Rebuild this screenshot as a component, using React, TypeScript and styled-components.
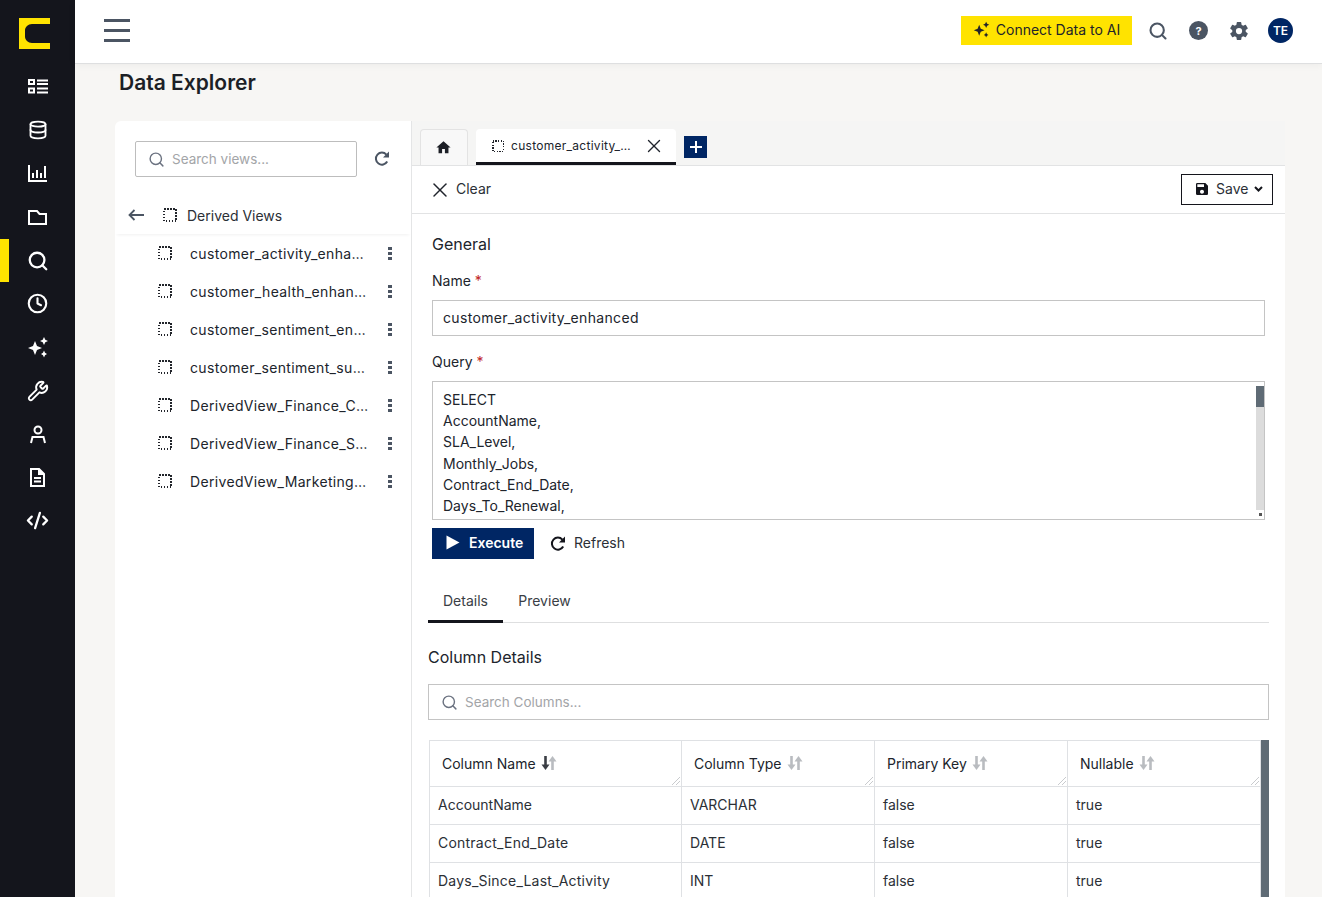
import React from 'react'
import styled, { createGlobalStyle } from 'styled-components'
import { Clock, CodeXml, Database, Search, Wrench, X } from 'lucide-react'
import { MdHome, MdSave } from 'react-icons/md'
import { IoSettingsSharp } from 'react-icons/io5'

const GlobalStyle = createGlobalStyle`
  html, body { margin: 0; padding: 0; height: 100%; overflow: hidden; }
  body {
    font-family: "Inter", "Liberation Sans", sans-serif;
    font-size: 14px;
    color: #20242c;
    background: #f7f6f4;
  }
  * { box-sizing: border-box; }
`

const Shell = styled.div`
  display: flex;
  width: 1322px;
  height: 897px;
  overflow: hidden;
`

const Sidebar = styled.nav`
  width: 75px;
  flex: none;
  background: #14151c;
  display: flex;
  flex-direction: column;
`

const Logo = styled.div`
  height: 65.3px;
  display: flex;
  align-items: center;
  justify-content: center;
  padding: 2px 6px 0 0;
`

const NavItem = styled.div<{ $active?: boolean }>`
  height: 43.4px;
  display: flex;
  align-items: center;
  justify-content: center;
  color: #fff;
  border-left: 9px solid ${(p) => (p.$active ? '#ffe300' : 'transparent')};
  padding-right: 9px;
`

const Main = styled.div`
  flex: 1;
  min-width: 0;
  display: flex;
  flex-direction: column;
`

const Header = styled.header`
  height: 64px;
  flex: none;
  background: #fff;
  border-bottom: 1px solid #dedfe0;
  box-shadow: 0 1px 8px rgba(0, 0, 0, 0.05);
  position: relative;
  display: flex;
  align-items: center;
  padding: 0 29px 2px 29px;
`

const Burger = styled.div`
  width: 26px;
  display: flex;
  flex-direction: column;
  gap: 7px;
  span {
    display: block;
    height: 3px;
    background: #4b5563;
  }
`

const HeaderRight = styled.div`
  margin-left: auto;
  display: flex;
  align-items: center;
`

const ConnectButton = styled.div`
  width: 171px;
  height: 29px;
  background: #ffe300;
  display: flex;
  align-items: center;
  justify-content: center;
  gap: 6px;
  padding-bottom: 2px;
  font-size: 14px;
  color: #22242a;
  margin-right: 16px;
`

const HeaderIcon = styled.div`
  width: 20px;
  height: 20px;
  margin-right: 20px;
  display: flex;
  align-items: center;
  justify-content: center;
  color: #4b5563;
`

const GearSlot = styled(HeaderIcon)`
  margin: 0 19px 0 1px;
`

const Avatar = styled.div`
  width: 25px;
  height: 25px;
  border-radius: 50%;
  background: #002664;
  color: #fff;
  font-size: 12px;
  font-weight: 600;
  display: flex;
  align-items: center;
  justify-content: center;
`

const Body = styled.div`
  flex: 1;
  min-height: 0;
  padding: 0 37px 0 40px;
  display: flex;
  flex-direction: column;
`

const PageTitle = styled.h1`
  margin: 0;
  height: 57px;
  padding: 6px 0 0 4px;
  font-size: 21px;
  line-height: 26px;
  font-weight: 600;
  color: #1c1f26;
`

const Panels = styled.div`
  flex: 1;
  min-height: 0;
  display: flex;
`

const LeftPanel = styled.aside`
  width: 297px;
  flex: none;
  background: #fff;
  border-right: 1px solid #e4e5e6;
  border-radius: 6px 0 0 0;
`

const SearchRow = styled.div`
  display: flex;
  align-items: center;
  padding: 20px 0 0 20px;
  gap: 17px;
`

const ViewSearch = styled.div`
  width: 222px;
  height: 36px;
  border: 1px solid #bdbdbd;
  border-radius: 2px;
  display: flex;
  align-items: center;
  gap: 7px;
  padding: 0 0 0 12px;
  color: #6b7280;
`

const Placeholder = styled.span`
  color: #a3a5a8;
  font-size: 13.5px;
`

const BackRow = styled.div`
  height: 38px;
  margin-top: 19px;
  display: flex;
  align-items: center;
  padding-left: 13px;
  box-shadow: 0 3px 3px -2px rgba(0, 0, 0, 0.06);
  color: #374151;
`

const BackSpacer = styled.span`
  width: 19px;
`

const BackLabel = styled.span`
  margin-left: 10px;
  font-size: 14px;
  color: #2b2f36;
`

const ViewRow = styled.div`
  height: 38px;
  display: flex;
  align-items: center;
  padding-left: 43px;
`

const ViewName = styled.span`
  width: 181px;
  margin-left: 18px;
  letter-spacing: 0.33px;
  white-space: nowrap;
  overflow: hidden;
  text-overflow: ellipsis;
  color: #20242c;
`

const Kebab = styled.div`
  margin-left: 17px;
  display: flex;
  flex-direction: column;
  gap: 2px;
  i {
    display: block;
    width: 4px;
    height: 3px;
    background: #4b5563;
  }
`

const RightPanel = styled.section`
  flex: 1;
  min-width: 0;
  background: #fff;
`

const TabBar = styled.div`
  height: 45px;
  background: #f5f5f4;
  border-bottom: 1px solid #e2e3e4;
  display: flex;
  align-items: flex-end;
  padding-left: 8px;
`

const HomeTab = styled.div`
  width: 48px;
  height: 36px;
  background: #f8f8f8;
  border: 1px solid #e3e3e3;
  border-bottom: none;
  border-radius: 4px 4px 0 0;
  display: flex;
  align-items: center;
  justify-content: center;
  padding-right: 1px;
  margin-right: 8px;
  color: #1c1f26;
`

const ActiveTab = styled.div`
  width: 200px;
  height: 36px;
  background: #fff;
  border-bottom: 3px solid #14151c;
  border-radius: 4px 4px 0 0;
  display: flex;
  align-items: center;
  padding-left: 16px;
  font-size: 12px;
  color: #20242c;
`

const TabName = styled.span`
  width: 121px;
  flex: none;
  margin: 0 11px 0 7px;
  letter-spacing: 0.28px;
  white-space: nowrap;
  overflow: hidden;
  text-overflow: ellipsis;
`

const AddTab = styled.div`
  width: 23px;
  height: 22px;
  margin: 0 0 7px 8px;
  background: #002664;
  color: #fff;
  display: flex;
  align-items: center;
  justify-content: center;
`

const Toolbar = styled.div`
  height: 48px;
  border-bottom: 1px solid #e2e3e4;
  display: flex;
  align-items: center;
  padding: 0 12px 0 16px;
`

const ClearLabel = styled.span`
  margin: 0 0 2px 4px;
  color: #2b2f36;
`

const SaveButton = styled.div`
  margin-left: auto;
  width: 92px;
  height: 31px;
  border: 1px solid #14151c;
  display: flex;
  align-items: center;
  gap: 6px;
  padding: 0 0 2px 12px;
  color: #2b2f36;
`

const Content = styled.div`
  padding: 0 16px;
`

const Form = styled.div`
  padding: 0 4px;
`

const SectionTitle = styled.h2`
  margin: 0;
  font-size: 16px;
  line-height: 20px;
  font-weight: 400;
  color: #20242c;
`

const GeneralTitle = styled(SectionTitle)`
  padding-top: 20px;
`

const Label = styled.div`
  margin-top: 18px;
  line-height: 18px;
  color: #20242c;
  b {
    color: #c02626;
    font-weight: 400;
  }
`

const TextInput = styled.div`
  margin-top: 10px;
  height: 36px;
  border: 1px solid #c4c4c4;
  padding: 0 0 2px 10px;
  letter-spacing: 0.33px;
  display: flex;
  align-items: center;
`

const QueryLabel = styled(Label)`
  margin-top: 17px;
`

const QueryBox = styled.div`
  margin-top: 10px;
  height: 139px;
  border: 1px solid #c4c4c4;
  position: relative;
  padding: 7px 10px;
  line-height: 21.2px;
  overflow: hidden;
`

const QueryScroll = styled.div`
  position: absolute;
  top: 4px;
  right: 0;
  bottom: 0;
  width: 8px;
  background: #dcdcdc;
  &::before {
    content: '';
    display: block;
    height: 21px;
    background: #5f6b75;
  }
  &::after {
    content: '';
    position: absolute;
    left: 0;
    right: 0;
    bottom: 0;
    height: 9px;
    background: linear-gradient(#555, #555) center / 3px 3px no-repeat #fff;
  }
`

const ActionRow = styled.div`
  display: flex;
  align-items: center;
  margin-top: 8px;
`

const ExecuteButton = styled.div`
  width: 102px;
  height: 31px;
  background: #002664;
  color: #fff;
  font-weight: 600;
  display: flex;
  align-items: center;
  gap: 9px;
  padding: 0 0 2px 14px;
`

const RefreshLabel = styled.span`
  margin: 0 0 2px 8px;
  color: #2b2f36;
`

const RefreshWrap = styled.div`
  margin-left: 16px;
  display: flex;
`

const SubTabs = styled.div`
  margin-top: 26px;
  height: 38px;
  border-bottom: 1px solid #dedfe0;
  display: flex;
`

const SubTab = styled.div<{ $active?: boolean }>`
  width: ${(p) => (p.$active ? '75px' : '83px')};
  height: 38px;
  display: flex;
  align-items: center;
  justify-content: center;
  padding-bottom: 4px;
  color: #3a3e45;
  border-bottom: 3px solid ${(p) => (p.$active ? '#14151c' : 'transparent')};
`

const ColumnTitle = styled(SectionTitle)`
  margin-top: 24px;
`

const ColumnSearch = styled.div`
  margin-top: 17px;
  height: 36px;
  border: 1px solid #c4c4c4;
  display: flex;
  align-items: center;
  gap: 7px;
  padding: 0 0 0 12px;
  color: #6b7280;
`

const TableWrap = styled.div`
  margin-top: 20px;
  padding-left: 1px;
  display: flex;
`

const Table = styled.div`
  width: 832px;
  flex: none;
  border-top: 1px solid #dfe1e4;
  border-left: 1px solid #dfe1e4;
`

const ScrollBar = styled.div`
  width: 8px;
  background: #5f6b75;
`

const Row = styled.div`
  display: grid;
  grid-template-columns: 252px 193px 193px 1fr;
`

const HeadCell = styled.div`
  height: 46px;
  border-right: 1px solid #dfe1e4;
  border-bottom: 1px solid #dfe1e4;
  padding: 0 0 1px 12px;
  display: flex;
  align-items: center;
  gap: 5px;
  position: relative;
  color: #20242c;
`

const ResizeMark = styled.svg`
  position: absolute;
  right: 1px;
  bottom: 1px;
`

const Cell = styled.div<{ $ident?: boolean }>`
  height: 38px;
  border-right: 1px solid #dfe1e4;
  border-bottom: 1px solid #dfe1e4;
  padding: 0 0 2px 8px;
  display: flex;
  align-items: center;
  letter-spacing: ${(p) => (p.$ident ? '0.22px' : '0')};
  color: #2b2f36;
`

const DottedSquare = ({ size = 14, color = '#22252b' }: { size?: number; color?: string }) => (
  <svg width={size} height={size} viewBox="0 0 14 14" fill="none" shapeRendering="crispEdges">
    <rect x="1" y="1" width="12" height="12" stroke={color} strokeWidth="1.5" strokeDasharray="1.5 1.5" />
  </svg>
)

const BrandLogo = () => (
  <svg width="31" height="31" viewBox="0 0 31 31">
    <path
      fill="#ffe300"
      d="M0 0H31V6H13C9 6 6 9 6 12.5V18.5C6 22 9 25 13 25H31V31H0Z"
    />
  </svg>
)

const ViewsIcon = () => (
  <svg width="20" height="15" viewBox="0 0 20 15" fill="none" stroke="#fff" strokeWidth="2">
    <rect x="1" y="1" width="5" height="4" />
    <rect x="1" y="9.5" width="5" height="4" />
    <path d="M9 1.5H20M9 5H20M9 9.5H20M9 13.5H20" />
  </svg>
)

const ChartIcon = () => (
  <svg width="19" height="17" viewBox="0 0 19 17" fill="none" stroke="#fff" strokeWidth="2">
    <path d="M1 0V16H19" />
    <path d="M5 8V13M9 5V13M13 8V13M17 1V13" />
  </svg>
)

const FolderIcon = () => (
  <svg width="19" height="15" viewBox="0 0 19 15" fill="none" stroke="#fff" strokeWidth="2">
    <path d="M1 1H9L11.5 4H18V14H1Z" />
  </svg>
)

const SparkleIcon = ({ color = '#fff', size = 22 }: { color?: string; size?: number }) => (
  <svg width={size} height={size} viewBox="0 0 22 22" fill={color}>
    <path d="M8 5L10 10L15 12L10 14L8 19L6 14L1 12L6 10Z" />
    <path d="M17 1L18.3 3.7L21 5L18.3 6.3L17 9L15.7 6.3L13 5L15.7 3.7Z" />
    <path d="M17 14.5L18 16.8L20 18L18 19.2L17 21.5L16 19.2L14 18L16 16.8Z" />
  </svg>
)

const PersonIcon = () => (
  <svg width="18" height="19" viewBox="0 0 18 19" fill="none" stroke="#fff" strokeWidth="2">
    <circle cx="9" cy="5" r="3.5" />
    <path d="M2 18L3.5 12H14.5L16 18" />
  </svg>
)

const DocIcon = () => (
  <svg width="15" height="19" viewBox="0 0 15 19" fill="#fff">
    <path d="M0 0H9.5L15 5.5V19H0ZM2 2V17H13V7H8V2Z" fillRule="evenodd" />
    <path d="M4 9H11V11H4ZM4 12.5H11V14.5H4Z" />
  </svg>
)

const HelpIcon = () => (
  <svg width="19" height="19" viewBox="0 0 19 19">
    <circle cx="9.5" cy="9.5" r="9.5" fill="#4b5563" />
    <text x="9.5" y="13.5" textAnchor="middle" fontSize="11" fontWeight="700" fill="#fff" fontFamily="Inter, sans-serif">
      ?
    </text>
  </svg>
)

const RefreshIcon = ({ color }: { color: string }) => (
  <svg width="16" height="16" viewBox="0 0 16 16" fill="none">
    <path d="M13.2 10.5A6 6 0 1 1 12.4 3.6" stroke={color} strokeWidth="2" />
    <path d="M15 0.5V6.5H9Z" fill={color} />
  </svg>
)

const SortIcon = ({ active }: { active?: boolean }) => {
  const left = active ? '#3a3e45' : '#b9bcc0'
  return (
    <svg width="16" height="16" viewBox="0 0 16 16" fill="none" strokeWidth="2.6">
      <path d="M4.5 1V11" stroke={left} />
      <path d="M0.5 9.5H8.5L4.5 15Z" fill={left} />
      <path d="M11.5 15V5" stroke="#b9bcc0" />
      <path d="M7.5 6.5H15.5L11.5 1Z" fill="#b9bcc0" />
    </svg>
  )
}

const PlayIcon = () => (
  <svg width="14" height="15" viewBox="0 0 14 15" fill="#fff">
    <path d="M0.5 0.5L13.5 7.5L0.5 14.5Z" />
  </svg>
)

const navIcons = [
  <ViewsIcon />,
  <Database size={20} strokeWidth={2.2} />,
  <ChartIcon />,
  <FolderIcon />,
  <Search size={22} strokeWidth={2.5} />,
  <Clock size={21} strokeWidth={2.4} />,
  <SparkleIcon />,
  <Wrench size={22} strokeWidth={2.1} />,
  <PersonIcon />,
  <DocIcon />,
  <CodeXml size={23} strokeWidth={2.4} />,
]

const views = [
  'customer_activity_enhanced',
  'customer_health_enhanced',
  'customer_sentiment_enhanced',
  'customer_sentiment_summary',
  'DerivedView_Finance_Contracts',
  'DerivedView_Finance_Systems',
  'DerivedView_Marketing_Campaigns',
]

const queryLines = ['SELECT', 'AccountName,', 'SLA_Level,', 'Monthly_Jobs,', 'Contract_End_Date,', 'Days_To_Renewal,']

const headers = ['Column Name', 'Column Type', 'Primary Key', 'Nullable']

const rows = [
  ['AccountName', 'VARCHAR', 'false', 'true'],
  ['Contract_End_Date', 'DATE', 'false', 'true'],
  ['Days_Since_Last_Activity', 'INT', 'false', 'true'],
]

const App = () => {
  return (
    <Shell>
      <GlobalStyle />
      <Sidebar>
        <Logo>
          <BrandLogo />
        </Logo>
        {navIcons.map((icon, i) => (
          <NavItem key={i} $active={i === 4}>
            {icon}
          </NavItem>
        ))}
      </Sidebar>
      <Main>
        <Header>
          <Burger>
            <span />
            <span />
            <span />
          </Burger>
          <HeaderRight>
            <ConnectButton>
              <SparkleIcon color="#22242a" size={17} />
              Connect Data to AI
            </ConnectButton>
            <HeaderIcon>
              <Search size={22} strokeWidth={2.5} />
            </HeaderIcon>
            <HeaderIcon>
              <HelpIcon />
            </HeaderIcon>
            <GearSlot>
              <IoSettingsSharp size={22} />
            </GearSlot>
            <Avatar>TE</Avatar>
          </HeaderRight>
        </Header>
        <Body>
          <PageTitle>Data Explorer</PageTitle>
          <Panels>
            <LeftPanel>
              <SearchRow>
                <ViewSearch>
                  <Search size={17} strokeWidth={2} />
                  <Placeholder>Search views...</Placeholder>
                </ViewSearch>
                <RefreshIcon color="#4b5563" />
              </SearchRow>
              <BackRow>
                <svg width="16" height="12" viewBox="0 0 16 12" fill="none" stroke="#4b5563" strokeWidth="1.8">
                  <path d="M16 6H1.5M6.5 1L1.5 6L6.5 11" />
                </svg>
                <BackSpacer />
                <DottedSquare />
                <BackLabel>Derived Views</BackLabel>
              </BackRow>
              {views.map((v) => (
                <ViewRow key={v}>
                  <DottedSquare />
                  <ViewName>{v}</ViewName>
                  <Kebab>
                    <i />
                    <i />
                    <i />
                  </Kebab>
                </ViewRow>
              ))}
            </LeftPanel>
            <RightPanel>
              <TabBar>
                <HomeTab>
                  <MdHome size={17} />
                </HomeTab>
                <ActiveTab>
                  <DottedSquare size={12} />
                  <TabName>customer_activity_enhanced</TabName>
                  <X size={22} strokeWidth={1.5} />
                </ActiveTab>
                <AddTab>
                  <svg width="12" height="12" viewBox="0 0 12 12" stroke="#fff" strokeWidth="2">
                    <path d="M6 0V12M0 6H12" />
                  </svg>
                </AddTab>
              </TabBar>
              <Toolbar>
                <X size={24} strokeWidth={1.5} />
                <ClearLabel>Clear</ClearLabel>
                <SaveButton>
                  <MdSave size={16} color="#14151c" />
                  Save
                  <svg width="9" height="6" viewBox="0 0 9 6" fill="none" stroke="#14151c" strokeWidth="2">
                    <path d="M1 1L4.5 4.5L8 1" />
                  </svg>
                </SaveButton>
              </Toolbar>
              <Content>
                <Form>
                  <GeneralTitle>General</GeneralTitle>
                  <Label>
                    Name <b>*</b>
                  </Label>
                  <TextInput>customer_activity_enhanced</TextInput>
                  <QueryLabel>
                    Query <b>*</b>
                  </QueryLabel>
                  <QueryBox>
                    {queryLines.map((l) => (
                      <div key={l}>{l}</div>
                    ))}
                    <QueryScroll />
                  </QueryBox>
                  <ActionRow>
                    <ExecuteButton>
                      <PlayIcon />
                      Execute
                    </ExecuteButton>
                    <RefreshWrap>
                      <RefreshIcon color="#14151c" />
                    </RefreshWrap>
                    <RefreshLabel>Refresh</RefreshLabel>
                  </ActionRow>
                </Form>
                <SubTabs>
                  <SubTab $active>Details</SubTab>
                  <SubTab>Preview</SubTab>
                </SubTabs>
                <ColumnTitle>Column Details</ColumnTitle>
                <ColumnSearch>
                  <Search size={17} strokeWidth={2} />
                  <Placeholder>Search Columns...</Placeholder>
                </ColumnSearch>
                <TableWrap>
                  <Table>
                    <Row>
                      {headers.map((h, i) => (
                        <HeadCell key={h}>
                          {h}
                          <SortIcon active={i === 0} />
                          <ResizeMark width="8" height="8" viewBox="0 0 8 8" stroke="#c9cbce" strokeWidth="1">
                            <path d="M0 8L8 0M4 8L8 4" />
                          </ResizeMark>
                        </HeadCell>
                      ))}
                    </Row>
                    {rows.map((r) => (
                      <Row key={r[0]}>
                        {r.map((c, i) => (
                          <Cell key={i} $ident={c.includes('_')}>
                            {c}
                          </Cell>
                        ))}
                      </Row>
                    ))}
                  </Table>
                  <ScrollBar />
                </TableWrap>
              </Content>
            </RightPanel>
          </Panels>
        </Body>
      </Main>
    </Shell>
  )
}

export default App
